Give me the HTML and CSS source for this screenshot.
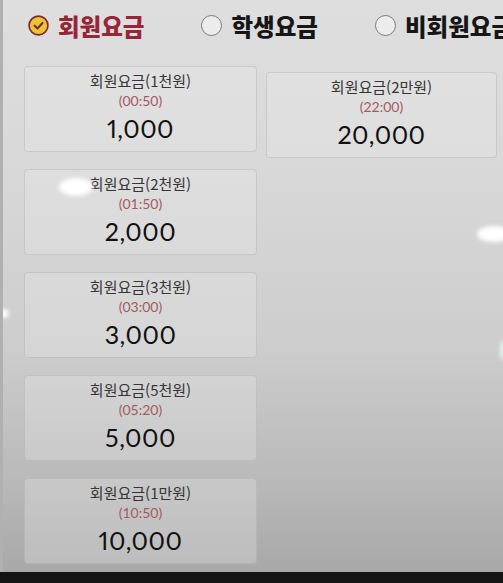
FILE: index.html
```html
<!DOCTYPE html>
<html lang="ko">
<head>
<meta charset="utf-8">
<title>요금 선택</title>
<link rel="stylesheet" href="styles.css">
</head>
<body>
<div class="screen">
  <div class="tabs">
    <div class="tab active">
      <span class="radio checked">
        <svg viewBox="0 0 20 20" width="20" height="20"><circle cx="10" cy="10" r="9" fill="#e4c736" stroke="#8a2331" stroke-width="1.6"/><path d="M6.3 10.2 L9 12.8 L13.8 7.6" fill="none" stroke="#8a2331" stroke-width="2" stroke-linecap="round" stroke-linejoin="round"/></svg>
      </span>
      <span class="tab-label">회원요금</span>
    </div>
    <div class="tab">
      <span class="radio"></span>
      <span class="tab-label">학생요금</span>
    </div>
    <div class="tab">
      <span class="radio"></span>
      <span class="tab-label">비회원요금</span>
    </div>
  </div>

  <div class="grid">
    <div class="card">
      <div class="title">회원요금(1천원)</div>
      <div class="time">(00:50)</div>
      <div class="price">1,000</div>
    </div>
    <div class="card">
      <div class="title">회원요금(2천원)</div>
      <div class="time">(01:50)</div>
      <div class="price">2,000</div>
    </div>
    <div class="card">
      <div class="title">회원요금(3천원)</div>
      <div class="time">(03:00)</div>
      <div class="price">3,000</div>
    </div>
    <div class="card">
      <div class="title">회원요금(5천원)</div>
      <div class="time">(05:20)</div>
      <div class="price">5,000</div>
    </div>
    <div class="card">
      <div class="title">회원요금(1만원)</div>
      <div class="time">(10:50)</div>
      <div class="price">10,000</div>
    </div>
    <div class="card shifted">
      <div class="title">회원요금(2만원)</div>
      <div class="time">(22:00)</div>
      <div class="price">20,000</div>
    </div>
  </div>

  <span class="glare g1"></span>
  <span class="glare g2"></span>
  <span class="glare g3"></span>
  <span class="glare g4"></span>
</div>
<div class="bezel"></div>
</body>
</html>
```

FILE: styles.css
```css
html, body {
  margin: 0;
  padding: 0;
}

body {
  width: 503px;
  height: 583px;
  overflow: hidden;
  background: #161616;
  font-family: "Noto Sans CJK KR", "Noto Sans", sans-serif;
}

.screen {
  position: relative;
  height: 572px;
  overflow: hidden;
  background: linear-gradient(180deg, #dedede 0%, #d8d8d8 30%, #cdcdcd 60%, #b8b8b8 85%, #a8a8a8 100%);
  border-left: 3px solid #b0b0b0;
  box-sizing: border-box;
}

.tabs {
  display: flex;
  align-items: center;
  gap: 57px;
  padding: 11px 0 0 25px;
  height: 29px;
  white-space: nowrap;
}

.tab {
  display: flex;
  align-items: center;
  gap: 9px;
  flex-shrink: 0;
}

.radio {
  display: block;
  width: 21px;
  height: 21px;
  border-radius: 50%;
  box-sizing: border-box;
  border: 1.3px solid #7a7a7a;
  background: #ececec;
}

.radio.checked {
  border: none;
  background: none;
}

.radio svg {
  display: block;
  width: 21px;
  height: 21px;
}

.tab-label {
  font-size: 23.5px;
  font-weight: 900;
  line-height: 30px;
  color: #161616;
}

.tab.active .tab-label {
  color: #962637;
}

.grid {
  display: grid;
  grid-auto-flow: column;
  grid-template-rows: repeat(5, 86px);
  grid-template-columns: 233px 231px;
  column-gap: 9px;
  row-gap: 17px;
  padding: 26px 0 0 21px;
}

.card {
  background: rgba(236, 236, 236, 0.3);
  border: 1px solid rgba(160, 160, 160, 0.35);
  border-radius: 4px;
  text-align: center;
  padding-top: 4px;
  box-sizing: border-box;
}

.card.shifted {
  margin-top: 6px;
  height: 86px;
}

.title {
  font-size: 15px;
  line-height: 20px;
  color: #353535;
}

.time {
  font-family: "Lato", "Noto Sans", sans-serif;
  font-size: 14px;
  line-height: 19px;
  color: #a35a62;
}

.price {
  font-family: "Lato", "Noto Sans", sans-serif;
  font-variant-numeric: proportional-nums;
  font-size: 25px;
  line-height: 30px;
  margin-top: 3px;
  color: #111111;
  letter-spacing: 0.5px;
}

.glare {
  position: absolute;
  border-radius: 50%;
  background: #ffffff;
  filter: blur(2px);
}

.g1 { left: 56px; top: 178px; width: 34px; height: 18px; }
.g2 { left: 474px; top: 226px; width: 34px; height: 16px; }
.g3 { left: -6px; top: 309px; width: 12px; height: 9px; }
.g4 { left: 497px; top: 340px; width: 10px; height: 20px; background: #e4f4ec; border-radius: 40%; }

.bezel {
  height: 11px;
  background: #141414;
}
```
